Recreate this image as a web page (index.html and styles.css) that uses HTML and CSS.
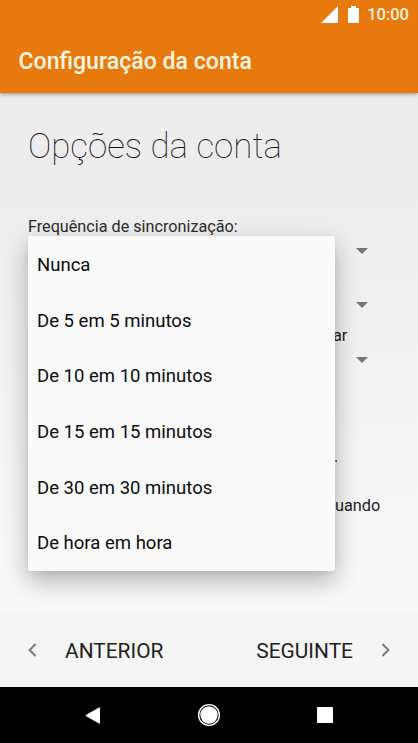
FILE: index.html
```html
<!DOCTYPE html>
<html lang="pt">
<head>
<meta charset="utf-8">
<title>Configuração da conta</title>
<link rel="stylesheet" href="styles.css">
</head>
<body>
<div class="screen">
  <header class="appbar">
    <div class="status">
      <svg class="signal" width="17" height="17" viewBox="0 0 17 17"><path d="M17 0V17H0Z"/></svg>
      <svg class="battery" width="11" height="17" viewBox="0 0 11 17"><path d="M3 0h5v2h2q1 0 1 1v13q0 1-1 1H1q-1 0-1-1V3q0-1 1-1h2z"/></svg>
      <span class="clock">10:00</span>
    </div>
    <h1 class="title">Configuração da conta</h1>
  </header>
  <main class="content">
    <h2 class="heading">Opções da conta</h2>
    <div class="label">Frequência de sincronização:</div>
    <div class="form">
      <div class="spinner"><svg width="12" height="6" viewBox="0 0 12 6"><path d="M0 0H12L6 6Z"/></svg></div>
      <div class="spinner second"><svg width="12" height="6" viewBox="0 0 12 6"><path d="M0 0H12L6 6Z"/></svg></div>
      <div class="tail notify">ar</div>
      <div class="spinner third"><svg width="12" height="6" viewBox="0 0 12 6"><path d="M0 0H12L6 6Z"/></svg></div>
      <div class="tail stop">.</div>
      <div class="tail when">uando</div>
      <ul class="menu">
        <li>Nunca</li>
        <li>De 5 em 5 minutos</li>
        <li>De 10 em 10 minutos</li>
        <li>De 15 em 15 minutos</li>
        <li>De 30 em 30 minutos</li>
        <li>De hora em hora</li>
      </ul>
    </div>
  </main>
  <footer class="actions">
    <button class="action">
      <svg width="9" height="14" viewBox="0 0 9 14"><path d="M7.6 1L1.6 7L7.6 13"/></svg>
      <span class="prev">ANTERIOR</span>
    </button>
    <button class="action">
      <span class="next">SEGUINTE</span>
      <svg width="9" height="14" viewBox="0 0 9 14"><path d="M1.4 1L7.4 7L1.4 13"/></svg>
    </button>
  </footer>
  <nav class="navbar">
    <svg width="15" height="17" viewBox="0 0 15 17"><path d="M14 .4Q15 0 15 1.2V15.8Q15 17 14 16.6L1.2 9.2Q.3 8.5 1.2 7.8Z"/></svg>
    <svg width="24" height="24" viewBox="0 0 24 24"><circle cx="12" cy="12" r="10.4" class="ring"/><circle cx="12" cy="12" r="8.7"/></svg>
    <svg width="16" height="16" viewBox="0 0 16 16"><rect width="16" height="16" rx=".8"/></svg>
  </nav>
</div>
</body>
</html>
```

FILE: styles.css
```css
* { box-sizing: border-box; }
body { margin: 0; font-family: Roboto, sans-serif; }
.screen {
  width: 418px;
  height: 743px;
  display: flex;
  flex-direction: column;
  overflow: hidden;
  background: linear-gradient(#ededed 180px, #f8f8f8 600px);
}
svg { display: block; }

.appbar {
  height: 93px;
  flex: none;
  background: #e67a0e;
  box-shadow: 0 1px 4px rgba(0, 0, 0, .42);
}
.status {
  height: 29px;
  padding-right: 9px;
  display: flex;
  justify-content: flex-end;
  align-items: center;
  color: #fff3d6;
}
.status svg { fill: #fff; }
.signal { margin-right: 10px; }
.battery { margin-right: 8px; }
.clock { font-size: 16.5px; font-weight: 500; line-height: 20px; }
.title {
  margin: 18px 0 0 18.5px;
  font-size: 23.1px;
  font-weight: 500;
  line-height: 30px;
  color: #fff6e0;
}

.content { height: 519px; flex: none; padding: 0 28px; }
.heading {
  margin: 32px 0 0;
  font-size: 34.9px;
  font-weight: 100;
  line-height: 44px;
  color: #111;
}
.label {
  margin-top: 48px;
  font-size: 16.2px;
  line-height: 20px;
  color: #2b2b2b;
}
.form { position: relative; height: 335px; margin-top: -1px; }
.spinner {
  display: flex;
  justify-content: flex-end;
  padding: 12px 22px 0 0;
}
.spinner svg { fill: #757575; }
.second { padding-top: 48px; }
.third { padding-top: 11px; }
.tail {
  padding-left: 305px;
  font-size: 16.3px;
  line-height: 20px;
  color: #1c1c1c;
}
.notify { margin-top: 18px; }
.stop { margin-top: 84px; padding-left: 306px; }
.when { margin-top: 29px; padding-left: 307px; }

.menu {
  position: absolute;
  inset: 0 auto auto 0;
  width: 306.5px;
  height: 334.5px;
  margin: 0;
  padding: 0 9px;
  list-style: none;
  background: #fafafa;
  border-radius: 2px;
  box-shadow: 0 10px 25px rgba(0, 0, 0, .28), 0 2px 6px rgba(0, 0, 0, .06);
  font-size: 18.55px;
  line-height: 55.7px;
  color: #0c0c0c;
}
.menu li { height: 55.65px; padding-top: 2px; }

.actions {
  height: 75px;
  flex: none;
  padding: 2px 28px 0;
  display: flex;
  justify-content: space-between;
  align-items: center;
  background: #f5f5f5;
}
.action {
  display: flex;
  align-items: center;
  gap: 28px;
  padding: 0;
  border: 0;
  background: none;
  font: 400 20.9px/28px Roboto, sans-serif;
  color: #212121;
}
.action svg { fill: none; stroke: #7b7b7b; stroke-width: 2; position: relative; top: -1px; }

.navbar {
  height: 56px;
  flex: none;
  padding: 0 85px;
  display: flex;
  justify-content: space-between;
  align-items: center;
  background: #000;
}
.navbar svg { fill: #fff; }
.navbar .ring { fill: none; stroke: #fff; stroke-width: 1.4; }
```
